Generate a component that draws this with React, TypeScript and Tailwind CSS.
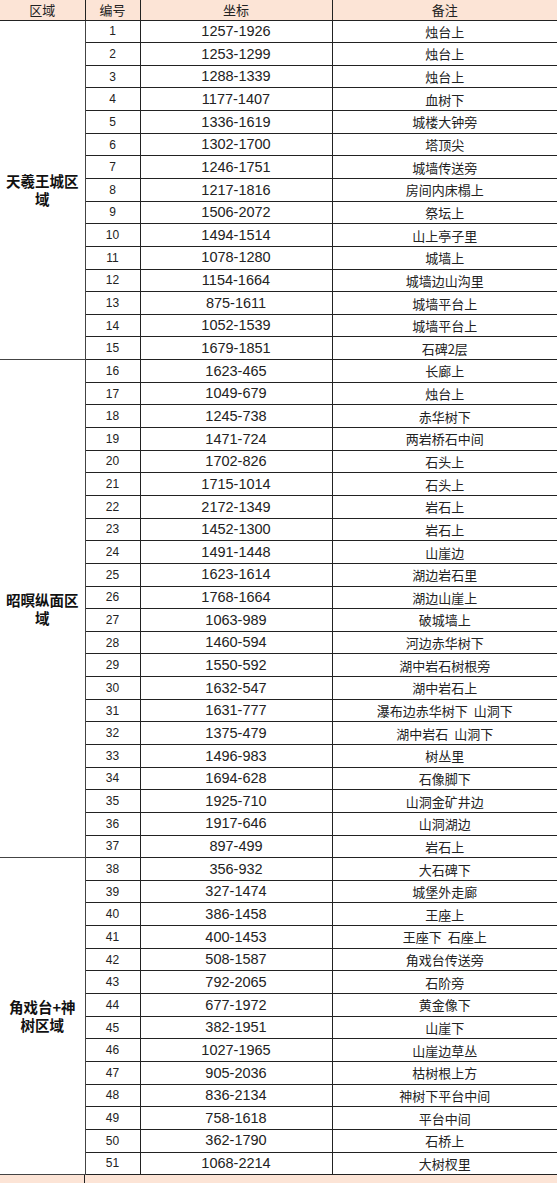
import React from "react";

type Row = [string, string];

const groups: { name: string; rows: Row[] }[] = [
  {
    name: "天羲王城区域",
    rows: [
      ["1257-1926", "烛台上"],
      ["1253-1299", "烛台上"],
      ["1288-1339", "烛台上"],
      ["1177-1407", "血树下"],
      ["1336-1619", "城楼大钟旁"],
      ["1302-1700", "塔顶尖"],
      ["1246-1751", "城墙传送旁"],
      ["1217-1816", "房间内床榻上"],
      ["1506-2072", "祭坛上"],
      ["1494-1514", "山上亭子里"],
      ["1078-1280", "城墙上"],
      ["1154-1664", "城墙边山沟里"],
      ["875-1611", "城墙平台上"],
      ["1052-1539", "城墙平台上"],
      ["1679-1851", "石碑2层"],
    ],
  },
  {
    name: "昭暝纵面区域",
    rows: [
      ["1623-465", "长廊上"],
      ["1049-679", "烛台上"],
      ["1245-738", "赤华树下"],
      ["1471-724", "两岩桥石中间"],
      ["1702-826", "石头上"],
      ["1715-1014", "石头上"],
      ["2172-1349", "岩石上"],
      ["1452-1300", "岩石上"],
      ["1491-1448", "山崖边"],
      ["1623-1614", "湖边岩石里"],
      ["1768-1664", "湖边山崖上"],
      ["1063-989", "破城墙上"],
      ["1460-594", "河边赤华树下"],
      ["1550-592", "湖中岩石树根旁"],
      ["1632-547", "湖中岩石上"],
      ["1631-777", "瀑布边赤华树下  山洞下"],
      ["1375-479", "湖中岩石  山洞下"],
      ["1496-983", "树丛里"],
      ["1694-628", "石像脚下"],
      ["1925-710", "山洞金矿井边"],
      ["1917-646", "山洞湖边"],
      ["897-499", "岩石上"],
    ],
  },
  {
    name: "角戏台+神树区域",
    rows: [
      ["356-932", "大石碑下"],
      ["327-1474", "城堡外走廊"],
      ["386-1458", "王座上"],
      ["400-1453", "王座下  石座上"],
      ["508-1587", "角戏台传送旁"],
      ["792-2065", "石阶旁"],
      ["677-1972", "黄金像下"],
      ["382-1951", "山崖下"],
      ["1027-1965", "山崖边草丛"],
      ["905-2036", "枯树根上方"],
      ["836-2134", "神树下平台中间"],
      ["758-1618", "平台中间"],
      ["362-1790", "石桥上"],
      ["1068-2214", "大树杈里"],
    ],
  },
];

const cjk = "font-['Noto_Sans_CJK_SC',sans-serif]";

export default function App() {
  let n = 0;
  return (
    <div className="w-[557px] bg-white text-[#222]">
      <table className="w-[557px] table-fixed border-collapse">
        <colgroup>
          <col className="w-[85px]" />
          <col className="w-[55px]" />
          <col className="w-[192px]" />
          <col className="w-[225px]" />
        </colgroup>
        <thead>
          <tr className={`h-[20px] bg-[#fce4d6] text-[13px] ${cjk}`}>
            <th className="border-b border-r border-[#222] font-normal leading-none">区域</th>
            <th className="border-b border-r border-[#222] font-normal leading-none">编号</th>
            <th className="border-b border-r border-[#222] font-normal leading-none">坐标</th>
            <th className="border-b border-[#222] font-normal leading-none">备注</th>
          </tr>
        </thead>
        <tbody>
          {groups.map((g) =>
            g.rows.map((r, i) => {
              n += 1;
              return (
                <tr key={n} className="h-[22.65px]">
                  {i === 0 && (
                    <td
                      rowSpan={g.rows.length}
                      className={`border-b border-r border-[#444] bg-white px-[2px] text-center align-middle text-[14.5px] font-bold leading-[18px] text-[#111] ${cjk}`}
                    >
                      {g.name}
                    </td>
                  )}
                  <td className="border border-[#222] p-0 text-center font-['Liberation_Sans',sans-serif] text-[12px] leading-none">
                    {n}
                  </td>
                  <td className="border border-[#222] p-0 text-center font-['Liberation_Sans',sans-serif] text-[14.5px] leading-none">
                    {r[0]}
                  </td>
                  <td
                    className={`border-b border-t border-l border-[#222] p-0 text-center text-[13px] leading-none whitespace-pre ${cjk}`}
                  >
                    {r[1]}
                  </td>
                </tr>
              );
            })
          )}
        </tbody>
      </table>
      <div className="flex h-[30px] bg-[#fce4d6]">
        <div className="w-[85px] border-r border-[#222]" />
      </div>
    </div>
  );
}
